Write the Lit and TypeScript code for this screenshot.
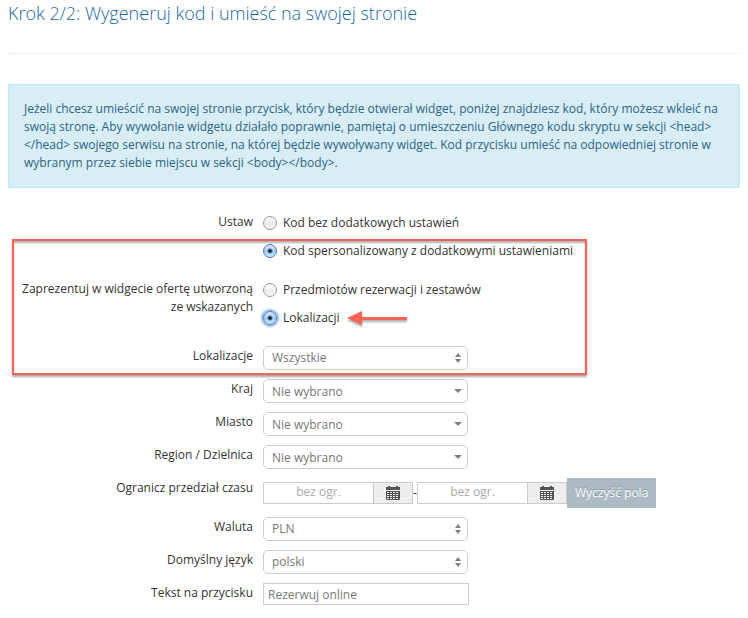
import { LitElement, html, css, svg } from "lit";
import { customElement, property, state } from "lit/decorators.js";

type Arrow = "updown" | "down";

const calendarIcon = svg`
  <svg class="calendar" viewBox="0 0 14 15" aria-hidden="true">
    <path fill="#555" fill-rule="evenodd"
      d="M2 1V0h2v1h6V0h2v1h2v3H0V1zM0 5h14v8q0 1-1 1H1q-1 0-1-1zM1 6v1h2V6zM4 6v1h2V6zM7 6v1h2V6zM10 6v1h2V6zM1 8v1h2V8zM4 8v1h2V8zM7 8v1h2V8zM10 8v1h2V8zM1 10v1h2v-1zM4 10v1h2v-1zM7 10v1h2v-1zM10 10v1h2v-1zM1 12v1h2v-1zM4 12v1h2v-1zM7 12v1h2v-1zM10 12v1h2v-1z" />
  </svg>`;

@customElement("select-row")
export class SelectRow extends LitElement {
  @property() label = "";
  @property() value = "";
  @property() arrow: Arrow = "updown";

  static styles = css`
    :host {
      display: grid;
      grid-template-columns: var(--columns);
      column-gap: 10px;
    }
    label {
      padding-top: 1px;
      text-align: right;
    }
    .box {
      position: relative;
      width: 205px;
      height: 24px;
    }
    select {
      appearance: none;
      box-sizing: border-box;
      display: block;
      width: 100%;
      height: 24px;
      margin: 0;
      padding: 0 24px 0 8px;
      border: 1px solid #ccc;
      border-radius: 5px;
      background: #fff;
      color: #777;
      font: inherit;
    }
    select.down {
      padding-top: 2px;
    }
    svg {
      position: absolute;
      top: 6px;
      right: 5px;
      width: 9px;
      height: 12px;
      fill: #808080;
      pointer-events: none;
    }
  `;

  render() {
    return html`
      <label for="field">${this.label}</label>
      <div class="box">
        <select id="field" class=${this.arrow}><option>${this.value}</option></select>
        ${this.arrow === "updown"
          ? html`<svg viewBox="0 0 9 12" aria-hidden="true"><path d="M1 5h6L4 1zM1 7h6L4 11z" /></svg>`
          : html`<svg viewBox="0 0 9 12" aria-hidden="true"><path d="M0 4h8L4 8z" /></svg>`}
      </div>
    `;
  }
}

@customElement("app-root")
export class AppRoot extends LitElement {
  @state() private from = "";
  @state() private to = "";

  static styles = css`
    :host {
      --columns: 245px minmax(0, 1fr);
      display: block;
      padding: 0 8px 13px;
      background: #fff;
      color: #333;
      font: 12px/18px "Open Sans", sans-serif;
    }
    h1 {
      margin: 0;
      padding-bottom: 26px;
      border-bottom: 1px dotted #ddd;
      color: #1a69a4;
      font-size: 18px;
      font-weight: 300;
      line-height: 27px;
    }
    .info {
      margin: 30px 0 24px;
      padding: 15px;
      border: 1px solid #bce8f1;
      background: #d9edf7;
      color: #2b6583;
    }
    form {
      position: relative;
      display: flex;
      flex-direction: column;
      gap: 9px;
    }
    .row {
      display: grid;
      grid-template-columns: var(--columns);
      column-gap: 10px;
    }
    .label {
      padding-top: 1px;
      text-align: right;
    }
    .radios {
      display: flex;
      flex-direction: column;
      gap: 10px;
      padding: 2px 0 10px;
    }
    .option {
      display: flex;
      align-items: center;
      gap: 6px;
    }
    .option label {
      display: flex;
      align-items: center;
      gap: 6px;
    }
    input[type="radio"] {
      appearance: none;
      box-sizing: border-box;
      width: 14px;
      height: 14px;
      margin: 0;
      border: 1px solid #999;
      border-radius: 50%;
      background: linear-gradient(#fff, #ececec 60%, #fafafa);
    }
    input[type="radio"]:checked {
      border-color: #5a72ae;
      background:
        radial-gradient(circle, #0b1a33 0 1px, transparent 3px),
        linear-gradient(#dcebfb, #9cc8f4 55%, #c9efff);
    }
    input[type="radio"].focused {
      box-shadow: 0 0 2px 2px #8ab9e6;
    }
    .arrow {
      width: 62px;
      height: 18px;
      filter: drop-shadow(0 2px 1px rgba(0, 0, 0, 0.35));
    }
    .frame {
      position: absolute;
      top: 27px;
      left: 4px;
      box-sizing: border-box;
      width: 575px;
      height: 136px;
      border: 2px solid #fa6557;
      box-shadow:
        0 2px 2px rgba(0, 0, 0, 0.35),
        inset 0 2px 2px rgba(0, 0, 0, 0.3);
      pointer-events: none;
    }
    .range {
      display: flex;
      align-items: center;
      height: 30px;
    }
    .date {
      display: flex;
      height: 22px;
    }
    input[type="text"] {
      box-sizing: border-box;
      height: 22px;
      margin: 0;
      border: 1px solid #ccc;
      border-radius: 0;
      background: #fff;
      color: #777;
      font: inherit;
    }
    .date input[type="text"] {
      width: 111px;
      padding: 0 0 4px;
      text-align: center;
    }
    .date input::placeholder {
      color: #aaa;
      opacity: 1;
    }
    .date button {
      display: flex;
      align-items: center;
      justify-content: center;
      box-sizing: border-box;
      width: 39px;
      margin: 0;
      padding: 0;
      border: 1px solid #ccc;
      border-left: 0;
      background: #eee;
    }
    .calendar {
      width: 14px;
      height: 15px;
    }
    .dash {
      width: 4px;
    }
    .clear {
      height: 30px;
      margin: 0;
      padding: 0 8px;
      border: 0;
      background: #abbac3;
      color: #fff;
      font: inherit;
      text-shadow: 0 -1px 0 rgba(0, 0, 0, 0.25);
      white-space: nowrap;
    }
    input.caption {
      width: 206px;
      padding: 0 4px;
    }
  `;

  private clear() {
    this.from = "";
    this.to = "";
  }

  private date(name: string, value: string, set: (v: string) => void) {
    return html`
      <div class="date">
        <input type="text" aria-label=${name} placeholder="bez ogr." .value=${value}
          @input=${(e: Event) => set((e.target as HTMLInputElement).value)} />
        <button type="button" aria-label="Kalendarz">${calendarIcon}</button>
      </div>
    `;
  }

  render() {
    return html`
      <h1>Krok 2/2: Wygeneruj kod i umieść na swojej stronie</h1>
      <div class="info">
        Jeżeli chcesz umieścić na swojej stronie przycisk, który będzie otwierał widget, poniżej
        znajdziesz kod, który możesz wkleić na swoją stronę. Aby wywołanie widgetu działało poprawnie,
        pamiętaj o umieszczeniu Głównego kodu skryptu w sekcji &lt;head&gt; &lt;/head&gt; swojego
        serwisu na stronie, na której będzie wywoływany widget. Kod przycisku umieść na odpowiedniej
        stronie w wybranym przez siebie miejscu w sekcji &lt;body&gt;&lt;/body&gt;.
      </div>
      <form>
        <div class="row" role="radiogroup" aria-labelledby="mode">
          <div class="label" id="mode">Ustaw</div>
          <div class="radios">
            <div class="option">
              <label><input type="radio" name="mode" />Kod bez dodatkowych ustawień</label>
            </div>
            <div class="option">
              <label><input type="radio" name="mode" checked />Kod spersonalizowany z dodatkowymi ustawieniami</label>
            </div>
          </div>
        </div>
        <div class="row" role="radiogroup" aria-labelledby="source">
          <div class="label" id="source">Zaprezentuj w widgecie ofertę utworzoną ze wskazanych</div>
          <div class="radios">
            <div class="option">
              <label><input type="radio" name="source" />Przedmiotów rezerwacji i zestawów</label>
            </div>
            <div class="option">
              <label><input class="focused" type="radio" name="source" checked />Lokalizacji</label>
              <svg class="arrow" viewBox="0 0 62 18" aria-hidden="true">
                <path fill="#fa6557" d="M1 9L16 2V8H61V11H16V16z" />
              </svg>
            </div>
          </div>
        </div>
        <select-row label="Lokalizacje" value="Wszystkie"></select-row>
        <select-row label="Kraj" value="Nie wybrano" arrow="down"></select-row>
        <select-row label="Miasto" value="Nie wybrano" arrow="down"></select-row>
        <select-row label="Region / Dzielnica" value="Nie wybrano" arrow="down"></select-row>
        <div class="row" role="group" aria-labelledby="range">
          <div class="label" id="range">Ogranicz przedział czasu</div>
          <div class="range">
            ${this.date("Od", this.from, (v) => (this.from = v))}
            <span class="dash">-</span>
            ${this.date("Do", this.to, (v) => (this.to = v))}
            <button class="clear" type="button" @click=${this.clear}>Wyczyść pola</button>
          </div>
        </div>
        <select-row label="Waluta" value="PLN"></select-row>
        <select-row label="Domyślny język" value="polski"></select-row>
        <div class="row">
          <label class="label" for="caption">Tekst na przycisku</label>
          <input class="caption" id="caption" type="text" value="Rezerwuj online" />
        </div>
        <div class="frame"></div>
      </form>
    `;
  }
}
